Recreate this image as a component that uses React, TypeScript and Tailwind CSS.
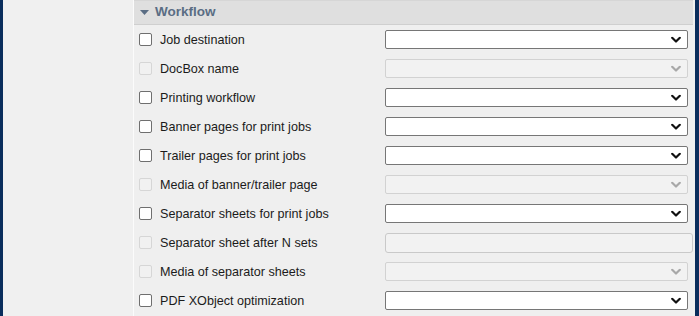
import React from "react"

type Row = {
  label: string
  kind: "select" | "input"
  disabled?: boolean
}

const rows: Row[] = [
  { label: "Job destination", kind: "select" },
  { label: "DocBox name", kind: "select", disabled: true },
  { label: "Printing workflow", kind: "select" },
  { label: "Banner pages for print jobs", kind: "select" },
  { label: "Trailer pages for print jobs", kind: "select" },
  { label: "Media of banner/trailer page", kind: "select", disabled: true },
  { label: "Separator sheets for print jobs", kind: "select" },
  { label: "Separator sheet after N sets", kind: "input", disabled: true },
  { label: "Media of separator sheets", kind: "select", disabled: true },
  { label: "PDF XObject optimization", kind: "select" },
]

function Chevron({ disabled }: { disabled?: boolean }) {
  return (
    <svg width="10" height="7" viewBox="0 0 10 7" className="absolute right-[6px] top-1/2 -translate-y-1/2">
      <path
        d="M1.2 1.3 L5 5 L8.8 1.3"
        fill="none"
        stroke={disabled ? "#a8a8a8" : "#111111"}
        strokeWidth="2.2"
        strokeLinecap="round"
        strokeLinejoin="round"
      />
    </svg>
  )
}

function Field({ row }: { row: Row }) {
  if (row.kind === "input") {
    return <div className="h-[20px] w-[308px] rounded-[3px] border border-[#c9c9c9] bg-[#f2f2f2]" />
  }
  return (
    <div
      className={
        row.disabled
          ? "relative h-[19px] w-[303px] rounded-[2px] border border-[#d2d2d2] bg-[#f2f2f2]"
          : "relative h-[19px] w-[303px] rounded-[2px] border border-[#767676] bg-white"
      }
    >
      <Chevron disabled={row.disabled} />
    </div>
  )
}

export default function App() {
  return (
    <div
      className="flex h-[316px] w-[699px] overflow-hidden bg-[#f0f0f0] text-[12.6px] text-[#1b1b1b]"
      style={{ fontFamily: '"Liberation Sans", Arial, sans-serif' }}
    >
      <div className="w-[3px] bg-[#0a2d5c]" />
      <div className="w-[130px] bg-[#f0f0f0]" />
      <div className="w-[1px] bg-[#fbfbfb]" />

      <div className="flex-1 bg-[#efefef]">
        {/* header */}
        <div className="flex h-[25px] items-center gap-[6px] border-b border-t border-b-[#cfcfcf] border-t-[#d6d6d6] bg-[#dfdfdf] pl-[6px]">
          <svg width="9" height="5" viewBox="0 0 9 5">
            <path d="M0 0 H9 L4.5 5 Z" fill="#5a6d84" />
          </svg>
          <span className="text-[13.5px] font-bold text-[#5a6d84]">Workflow</span>
        </div>

        {rows.map((row) => (
          <div key={row.label} className="flex h-[29px] items-center">
            <div className="w-[26px] pl-[5px]">
              <div
                className={
                  row.disabled
                    ? "h-[13px] w-[13px] rounded-[2px] border border-[#d6d6d6] bg-[#f1f1f1]"
                    : "h-[13px] w-[13px] rounded-[2px] border border-[#6f6f6f] bg-white"
                }
              />
            </div>
            <div className="w-[225px] pt-[1px]">{row.label}</div>
            <Field row={row} />
          </div>
        ))}
      </div>

      <div className="w-[2px] bg-[#f0f0f0]" />
      <div className="w-[4px] bg-[#0a2d5c]" />
    </div>
  )
}
